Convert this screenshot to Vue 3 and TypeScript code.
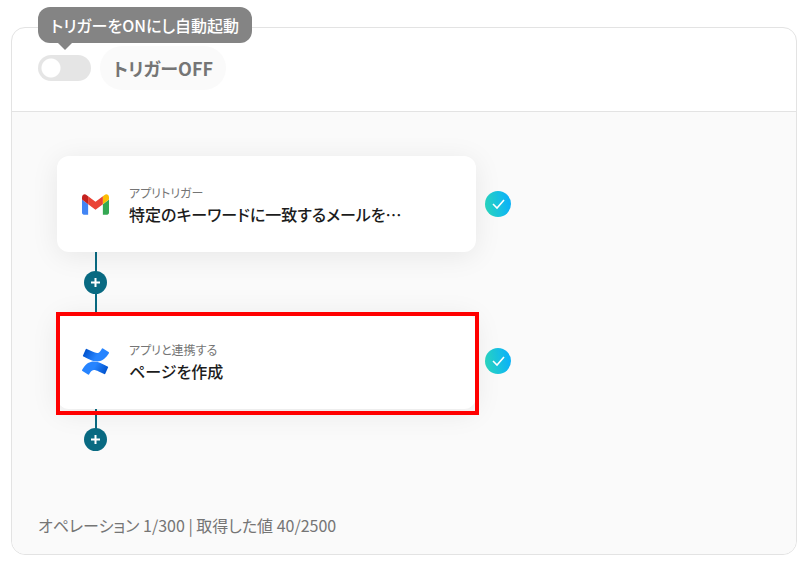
<script setup lang="ts">
import { ref } from 'vue'

interface Step {
  id: number
  icon: 'gmail' | 'confluence'
  label: string
  title: string
  selected: boolean
}

const enabled = ref(false)

const steps: Step[] = [
  { id: 1, icon: 'gmail', label: 'アプリトリガー', title: '特定のキーワードに一致するメールを⋯', selected: false },
  { id: 2, icon: 'confluence', label: 'アプリと連携する', title: 'ページを作成', selected: true },
]
</script>

<template>
  <main class="panel">
    <header class="head">
      <div class="toggle">
        <input id="trigger" v-model="enabled" class="switch" type="checkbox" role="switch" />
        <span class="tooltip" role="tooltip">トリガーをONにし自動起動</span>
      </div>
      <label class="state" for="trigger">{{ enabled ? 'トリガーON' : 'トリガーOFF' }}</label>
    </header>

    <section class="body">
      <ol class="steps">
        <li v-for="step in steps" :key="step.id" class="step">
          <div class="row">
            <article class="card" :class="{ selected: step.selected }">
              <svg v-if="step.icon === 'gmail'" class="icon" viewBox="52 42 88 66" aria-hidden="true">
                <path fill="#4285f4" d="M58 108h14V74L52 59v43c0 3.32 2.69 6 6 6" />
                <path fill="#34a853" d="M120 108h14c3.32 0 6-2.69 6-6V59l-20 15" />
                <path fill="#fbbc04" d="M120 48v26l20-15v-8c0-7.42-8.47-11.65-14.4-7.2" />
                <path fill="#ea4335" d="M72 74V48l24 18 24-18v26L96 92" />
                <path fill="#c5221f" d="M52 51v8l20 15V48l-5.6-4.2c-5.94-4.45-14.4-.22-14.4 7.2" />
              </svg>
              <svg v-else class="icon" viewBox="0 0 64 64" aria-hidden="true">
                <defs>
                  <linearGradient id="lower" gradientUnits="userSpaceOnUse" x1="60" y1="62" x2="22" y2="40">
                    <stop offset="0.1" stop-color="#0052cc" />
                    <stop offset="0.8" stop-color="#2684ff" />
                  </linearGradient>
                  <linearGradient id="upper" gradientUnits="userSpaceOnUse" x1="4" y1="2" x2="42" y2="24">
                    <stop offset="0.1" stop-color="#0052cc" />
                    <stop offset="0.8" stop-color="#2684ff" />
                  </linearGradient>
                </defs>
                <path fill="url(#lower)" d="M2.3 48.4c-.7 1.1-1.4 2.4-2 3.4a2.1 2.1 0 0 0 .7 2.8l13.2 8.1a2.1 2.1 0 0 0 2.9-.7c.5-.9 1.2-2.1 2-3.3 5.3-8.8 10.7-7.7 20.4-3.1l13.1 6.2a2.1 2.1 0 0 0 2.8-1.1l6.3-14.2a2.1 2.1 0 0 0-1.1-2.8c-2.8-1.3-8.3-3.9-13.2-6.3C29.6 28.9 14.6 29.5 2.3 48.4z" />
                <path fill="url(#upper)" d="M61.7 15.6c.7-1.1 1.4-2.4 2-3.4a2.1 2.1 0 0 0-.7-2.8L49.8 1.3a2.1 2.1 0 0 0-2.9.7c-.5.9-1.2 2.1-2 3.3-5.3 8.8-10.7 7.7-20.4 3.1L11.4 2.2a2.1 2.1 0 0 0-2.8 1.1L2.3 17.5a2.1 2.1 0 0 0 1.1 2.8c2.8 1.3 8.3 3.9 13.2 6.3 17.8 8.5 32.8 7.9 45.1-11z" />
              </svg>
              <div class="text">
                <p class="label">{{ step.label }}</p>
                <h2 class="title">{{ step.title }}</h2>
              </div>
            </article>
            <span class="done" role="img" aria-label="完了">
              <svg viewBox="0 0 26 26" aria-hidden="true"><path d="M8 13l4 4 7-8" /></svg>
            </span>
          </div>
          <div class="connector">
            <button class="add" type="button" aria-label="ステップを追加">
              <svg viewBox="0 0 23 23" aria-hidden="true"><path d="M11.5 7v9M7 11.5h9" /></svg>
            </button>
          </div>
        </li>
      </ol>
      <p class="usage">オペレーション 1/300 | 取得した値 40/2500</p>
    </section>
  </main>
</template>

<style>
body {
  background: #fff;
}
</style>

<style scoped>
.panel {
  margin: 27px 11px 10px;
  border: 1px solid #e3e3e3;
  border-radius: 14px;
  background: #fff;
  color: #757575;
  font-family: "Noto Sans CJK JP", "Noto Sans", sans-serif;
  font-feature-settings: "palt";
}

.head {
  display: flex;
  gap: 9px;
  padding: 18px 26px 21px;
  border-bottom: 1px solid #e3e3e3;
}

.toggle {
  position: relative;
  display: flex;
  align-items: center;
}

.switch {
  appearance: none;
  width: 53px;
  height: 26px;
  margin: 0;
  border-radius: 13px;
  background: radial-gradient(circle at 13px 13px, #fff 9px, #e5e5e5 10px);
  cursor: pointer;
}

.switch:checked {
  background: radial-gradient(circle at 40px 13px, #fff 9px, #096a82 10px);
}

.tooltip {
  position: absolute;
  bottom: 47px;
  left: 0;
  padding: 6px 13px;
  border-radius: 12px;
  background: #848484;
  color: #fff;
  font-size: 16px;
  font-weight: 500;
  line-height: 24px;
  white-space: nowrap;
}

.tooltip::after {
  content: "";
  position: absolute;
  top: 100%;
  left: 20px;
  border: 7px solid transparent;
  border-top-color: #848484;
  border-bottom: 0;
}

.state {
  padding: 0 13px;
  border-radius: 22px;
  background: #fafafa;
  font-size: 18px;
  font-weight: 700;
  line-height: 44px;
}

.body {
  padding: 44px 26px 17px;
  border-radius: 0 0 14px 14px;
  background: #fafafa;
}

.steps {
  margin: 0;
  padding: 0 0 0 19px;
  list-style: none;
}

.row {
  display: flex;
  align-items: center;
  gap: 9px;
}

.card {
  position: relative;
  display: flex;
  flex: 0 1 419px;
  align-items: center;
  gap: 20px;
  box-sizing: border-box;
  min-width: 0;
  padding: 27px 25px;
  border-radius: 12px;
  background: #fff;
  box-shadow: 0 4px 28px rgba(0, 0, 0, 0.08);
}

.selected::after {
  content: "";
  position: absolute;
  inset: -1px -3px -6px -1px;
  border: 4px solid #f00;
}

.icon {
  flex: none;
  width: 27px;
  height: 27px;
}

.text {
  min-width: 0;
}

.label {
  margin: 0;
  font-size: 12px;
  line-height: 20px;
}

.title {
  margin: 0;
  color: #1c1c1c;
  font-size: 16px;
  font-weight: 500;
  line-height: 22px;
}

.done {
  flex: none;
  width: 26px;
  height: 26px;
  border-radius: 50%;
  background: linear-gradient(80deg, #2ddabc, #0cb3f5 85%);
}

.done svg,
.add svg {
  display: block;
  fill: none;
  stroke: #fff;
}

.done svg {
  stroke-width: 1.6;
}

.add svg {
  stroke-width: 2;
}

.connector {
  display: flex;
  align-items: center;
  justify-content: center;
  width: 77px;
  height: 61px;
  background: linear-gradient(#096a82, #096a82) center / 2px 100% no-repeat;
}

.step:last-child .connector {
  background-position: top;
  background-size: 2px 50%;
}

.add {
  width: 23px;
  height: 23px;
  padding: 0;
  border: 0;
  border-radius: 50%;
  background: #096a82;
  cursor: pointer;
}

.usage {
  margin: 43px 0 0;
  font-size: 16px;
  line-height: 24px;
}
</style>
